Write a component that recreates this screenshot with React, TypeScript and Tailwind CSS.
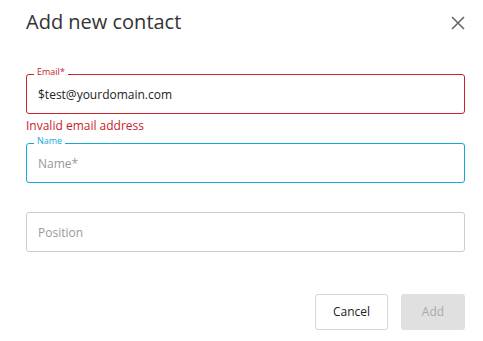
function Field({
  label,
  value,
  placeholder,
  tone,
}: {
  label?: string
  value?: string
  placeholder: string
  tone: 'error' | 'focus' | 'idle'
}) {
  const border =
    tone === 'error' ? 'border-[#c8222c]' : tone === 'focus' ? 'border-[#14a8dc]' : 'border-[#cccccc]'
  const labelColor = tone === 'error' ? 'text-[#c8222c]' : 'text-[#14a8dc]'
  return (
    <div className={`relative h-[40px] rounded-[3px] border ${border} bg-white`}>
      {label && (
        <span className={`absolute left-[7px] top-[-9px] bg-white px-[3px] text-[9px] leading-[12px] ${labelColor}`}>
          {label}
        </span>
      )}
      <input
        readOnly
        value={value ?? ''}
        placeholder={placeholder}
        className="h-full w-full bg-transparent px-[11px] text-[12px] text-[#222] placeholder-[#999] outline-none"
      />
    </div>
  )
}

export default function App() {
  return (
    <div className="h-[341px] w-[483px] bg-white pl-[26px] pr-[18px] font-['Open_Sans','Noto_Sans',sans-serif] text-[#333]">
      {/* Header */}
      <div className="flex items-center justify-between pt-[8px]">
        <h1 className="text-[20px] leading-[28px] text-[#333]">Add new contact</h1>
        <button className="mt-[2px] text-[#666]">
          <svg width="14" height="14" viewBox="0 0 14 14" fill="none" stroke="currentColor" strokeWidth="1.6">
            <path d="M1 1L13 13M13 1L1 13" />
          </svg>
        </button>
      </div>

      <div className="mt-[38px]">
        <Field label="Email*" value="$test@yourdomain.com" placeholder="Email*" tone="error" />
        <p className="mt-[4px] text-[12px] leading-[16px] text-[#c8222c]">Invalid email address</p>
      </div>

      <div className="mt-[9px]">
        <Field label="Name" placeholder="Name*" tone="focus" />
      </div>

      <div className="mt-[29px]">
        <Field placeholder="Position" tone="idle" />
      </div>

      <div className="mt-[42px] flex justify-end gap-[13px]">
        <button className="h-[36px] w-[73px] rounded-[3px] border border-[#d6d6d6] bg-white text-[12px] text-[#222]">
          Cancel
        </button>
        <button disabled className="h-[36px] w-[64px] rounded-[3px] bg-[#e0e0e0] text-[12px] text-[#aaa]">
          Add
        </button>
      </div>
    </div>
  )
}
